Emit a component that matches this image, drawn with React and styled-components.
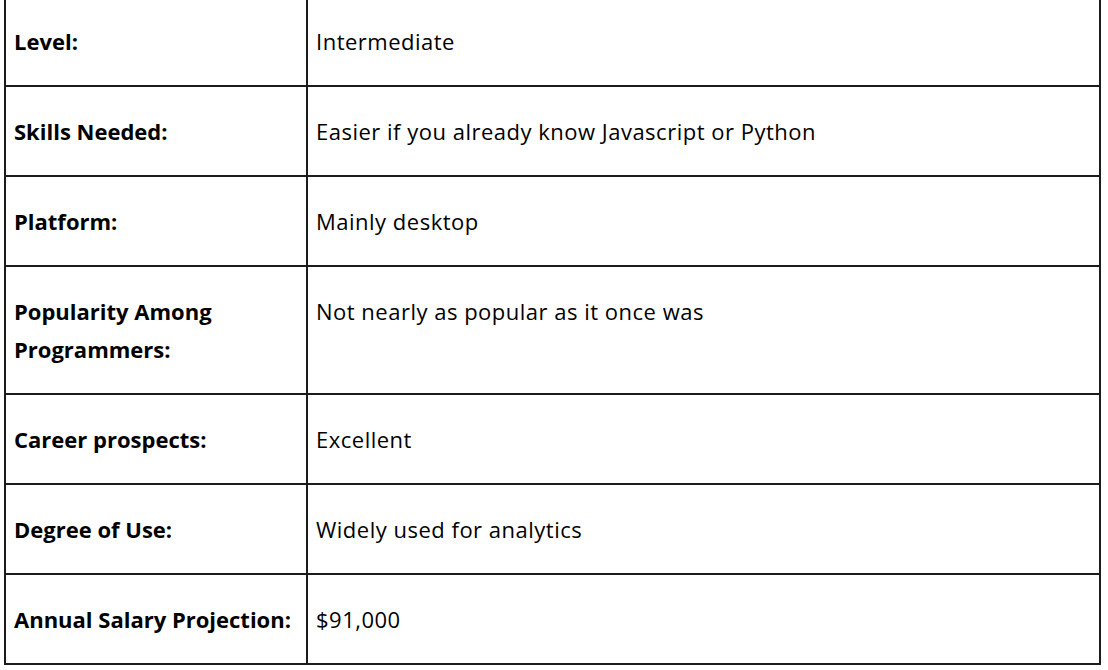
import styled, { createGlobalStyle } from "styled-components";

const GlobalStyle = createGlobalStyle`
  html, body {
    margin: 0;
    padding: 0;
    background: #fff;
  }
  body {
    font-family: "Open Sans", Lato, sans-serif;
    color: #000;
  }
`;

const Table = styled.table`
  border-collapse: collapse;
  margin: -5px 0 0 4px;
  width: 1097px;
  table-layout: fixed;
`;

const Cell = styled.td`
  border: 2px solid #1c1c1c;
  padding: 25px 8px 25px 8px;
  vertical-align: top;
  font-size: 22px;
  line-height: 38px;
  font-weight: ${(p) => (p.$label ? 700 : 400)};
  letter-spacing: ${(p) => (p.$label ? "0" : "0.5px")};
  width: ${(p) => (p.$label ? "284px" : "auto")};
`;

const rows = [
  ["Level:", "Intermediate"],
  ["Skills Needed:", "Easier if you already know Javascript or Python"],
  ["Platform:", "Mainly desktop"],
  ["Popularity Among Programmers:", "Not nearly as popular as it once was"],
  ["Career prospects:", "Excellent"],
  ["Degree of Use:", "Widely used for analytics"],
  ["Annual Salary Projection:", "$91,000"],
];

export default function App() {
  return (
    <>
      <GlobalStyle />
      <Table>
        <tbody>
          {rows.map(([label, value]) => (
            <tr key={label}>
              <Cell $label>{label}</Cell>
              <Cell>{value}</Cell>
            </tr>
          ))}
        </tbody>
      </Table>
    </>
  );
}
